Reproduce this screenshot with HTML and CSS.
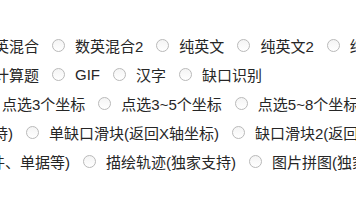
FILE: index.html
```html
<!DOCTYPE html>
<html lang="zh-CN">
<head>
<meta charset="utf-8">
<title>类型选择</title>
<link rel="stylesheet" href="styles.css">
</head>
<body>
<div class="types">
  <div class="row row-1">
    <label class="opt"><input type="radio" name="t"><span>数英混合</span></label>
    <label class="opt"><input type="radio" name="t"><span>数英混合2</span></label>
    <label class="opt"><input type="radio" name="t"><span>纯英文</span></label>
    <label class="opt"><input type="radio" name="t"><span>纯英文2</span></label>
    <label class="opt"><input type="radio" name="t"><span>纯中文</span></label>
  </div>
  <div class="row row-2">
    <label class="opt"><input type="radio" name="t"><span>计算题</span></label>
    <label class="opt"><input type="radio" name="t"><span>GIF</span></label>
    <label class="opt"><input type="radio" name="t"><span>汉字</span></label>
    <label class="opt"><input type="radio" name="t"><span>缺口识别</span></label>
  </div>
  <div class="row row-3">
    <label class="opt"><input type="radio" name="t"><span>点选3个坐标</span></label>
    <label class="opt"><input type="radio" name="t"><span>点选3~5个坐标</span></label>
    <label class="opt"><input type="radio" name="t"><span>点选5~8个坐标</span></label>
  </div>
  <div class="row row-4">
    <label class="opt"><input type="radio" name="t"><span>(独家支持)</span></label>
    <label class="opt"><input type="radio" name="t"><span>单缺口滑块(返回X轴坐标)</span></label>
    <label class="opt"><input type="radio" name="t"><span>缺口滑块2(返回X轴坐标)</span></label>
  </div>
  <div class="row row-5">
    <label class="opt"><input type="radio" name="t"><span>(证件、单据等)</span></label>
    <label class="opt"><input type="radio" name="t"><span>描绘轨迹(独家支持)</span></label>
    <label class="opt"><input type="radio" name="t"><span>图片拼图(独家支持)</span></label>
  </div>
</div>
</body>
</html>
```
FILE: styles.css
```css
html, body {
  margin: 0;
  padding: 0;
  background: #ffffff;
  overflow: hidden;
}

body {
  width: 356px;
  height: 200px;
  font-family: "Liberation Sans", "Noto Sans CJK SC", sans-serif;
  font-size: 15px;
  color: #262626;
}

.types {
  padding-top: 31px;
}

.row {
  display: flex;
  align-items: center;
  height: 29px;
  white-space: nowrap;
}

.opt {
  display: flex;
  align-items: center;
  flex: none;
  margin-right: 13px;
}

.opt input {
  appearance: none;
  -webkit-appearance: none;
  width: 13px;
  height: 13px;
  margin: 0 10px 0 0;
  border: 1px solid #b9b9b9;
  border-radius: 50%;
  background: linear-gradient(#f4f4f4, #ffffff);
  box-sizing: border-box;
  flex: none;
}

.row-1 { margin-left: -44px; }
.row-2 { margin-left: -29px; }
.row-3 { margin-left: -21px; }
.row-4 { margin-left: -80px; }
.row-5 { margin-left: -53px; }
```
